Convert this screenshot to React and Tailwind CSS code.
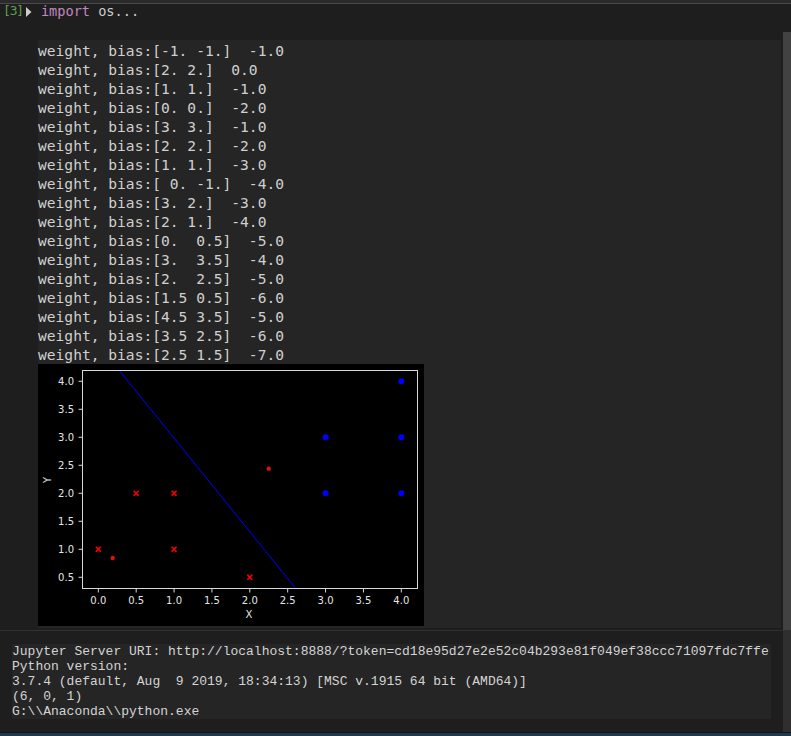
import React from "react";

const lines = [
  "weight, bias:[-1. -1.]  -1.0",
  "weight, bias:[2. 2.]  0.0",
  "weight, bias:[1. 1.]  -1.0",
  "weight, bias:[0. 0.]  -2.0",
  "weight, bias:[3. 3.]  -1.0",
  "weight, bias:[2. 2.]  -2.0",
  "weight, bias:[1. 1.]  -3.0",
  "weight, bias:[ 0. -1.]  -4.0",
  "weight, bias:[3. 2.]  -3.0",
  "weight, bias:[2. 1.]  -4.0",
  "weight, bias:[0.  0.5]  -5.0",
  "weight, bias:[3.  3.5]  -4.0",
  "weight, bias:[2.  2.5]  -5.0",
  "weight, bias:[1.5 0.5]  -6.0",
  "weight, bias:[4.5 3.5]  -5.0",
  "weight, bias:[3.5 2.5]  -6.0",
  "weight, bias:[2.5 1.5]  -7.0",
];

const info = [
  "Jupyter Server URI: http://localhost:8888/?token=cd18e95d27e2e52c04b293e81f049ef38ccc71097fdc7ffe",
  "Python version:",
  "3.7.4 (default, Aug  9 2019, 18:34:13) [MSC v.1915 64 bit (AMD64)]",
  "(6, 0, 1)",
  "G:\\\\Anaconda\\\\python.exe",
];

// plot coords -> pixels inside the 386x262 figure
const px = (v) => 60.3 + v * 75.75;
const py = (v) => 17.3 + (4 - v) * 56;

const ticks = ["0.5", "1.0", "1.5", "2.0", "2.5", "3.0", "3.5", "4.0"];
const xticks = ["0.0", "0.5", "1.0", "1.5", "2.0", "2.5", "3.0", "3.5", "4.0"];

const crosses = [[0, 1], [0.5, 2], [1, 2], [1, 1], [2, 0.5]];
const blues = [[3, 2], [4, 2], [3, 3], [4, 3], [4, 4]];

function Plot() {
  return (
    <svg width="386" height="262" className="block bg-black">
      <line x1="81.3" y1="6.5" x2="257" y2="223.5" stroke="#0000ff" strokeWidth="1" />
      {ticks.map((t) => (
        <g key={t}>
          <line x1="40.5" x2="44.5" y1={py(+t)} y2={py(+t)} stroke="#d8d8d8" />
          <text x="36" y={py(+t) + 3.5} textAnchor="end" fontSize="10" fill="#e6e6e6" fontFamily="DejaVu Sans, sans-serif">
            {t}
          </text>
        </g>
      ))}
      {xticks.map((t) => (
        <g key={t}>
          <line y1="224.5" y2="228.5" x1={px(+t)} x2={px(+t)} stroke="#d8d8d8" />
          <text x={px(+t)} y="240" textAnchor="middle" fontSize="10" fill="#e6e6e6" fontFamily="DejaVu Sans, sans-serif">
            {t}
          </text>
        </g>
      ))}
      <text x="211" y="254" textAnchor="middle" fontSize="10" fill="#e6e6e6" fontFamily="DejaVu Sans, sans-serif">X</text>
      <text x="0" y="0" transform="translate(13 116) rotate(-90)" textAnchor="middle" fontSize="10" fill="#e6e6e6" fontFamily="DejaVu Sans, sans-serif">Y</text>
      {crosses.map(([x, y]) => (
        <path
          key={x + "-" + y}
          d={`M${px(x) - 2.5} ${py(y) - 2.5}L${px(x) + 2.5} ${py(y) + 2.5}M${px(x) + 2.5} ${py(y) - 2.5}L${px(x) - 2.5} ${py(y) + 2.5}`}
          stroke="#ff0000"
          strokeWidth="1.6"
        />
      ))}
      <circle cx={px(0.19)} cy={py(0.845)} r="2.2" fill="#e01010" />
      <circle cx={px(2.25)} cy={py(2.44)} r="2.2" fill="#e01010" />
      {blues.map(([x, y]) => (
        <circle key={x + "-" + y} cx={px(x)} cy={py(y)} r="3" fill="#0000ff" />
      ))}
      <rect x="44.5" y="6.5" width="335" height="218" fill="none" stroke="#d8d8d8" strokeWidth="1" />
    </svg>
  );
}

export default function App() {
  return (
    <div className="w-[791px] h-[736px] bg-[#1e1e1e] flex flex-col overflow-hidden">
      {/* top edge */}
      <div className="h-[3px] bg-[#2a2a2a]" />
      <div className="h-px bg-[#4a4a4a]" />

      {/* cell header */}
      <div className="h-[28px] flex items-start leading-[14px] font-['DejaVu_Sans_Mono',monospace]">
        <span className="ml-[3px] text-[13px] tracking-[-1.2px] text-[#5f9e50]">[3]</span>
        <svg width="6" height="10" className="ml-[3px] mt-[3px]">
          <path d="M0 0L5.5 5L0 10Z" fill="#cccccc" />
        </svg>
        <span className="ml-[9px] text-[13.6px] text-[#c586c0]">import</span>
        <span className="text-[13.6px] text-[#cccccc] whitespace-pre"> os...</span>
      </div>

      {/* cell output */}
      <div className="h-[598px] flex">
        <div className="w-[781px] pt-[8px]">
          <div className="ml-[38px] bg-[#252525] pt-px pb-[2px]">
            <div className="font-['DejaVu_Sans_Mono',monospace] text-[14.6px] leading-[19px] text-[#d0d0d0] whitespace-pre">
              {lines.map((l, i) => (
                <div key={i}>{l}</div>
              ))}
            </div>
            <Plot />
          </div>
        </div>
        <div className="ml-[2px] w-[8px] bg-[#424242]" />
      </div>

      {/* bottom panel */}
      <div className="h-px bg-[#303030]" />
      <div className="h-[101px] flex">
        <div className="w-[783px] pt-[13px]">
          <div className="ml-[12px] w-[759px] bg-[#252525] font-['Liberation_Mono',monospace] text-[13px] leading-[15px] text-[#d4d4d4] whitespace-pre">
            {info.map((l, i) => (
              <div key={i}>{l}</div>
            ))}
          </div>
        </div>
        <div className="w-[8px] bg-[#2f2f2f]" />
      </div>
      <div className="h-px bg-[#141414]" />
      <div className="h-[3px] bg-[#1b3a52]" />
    </div>
  );
}
